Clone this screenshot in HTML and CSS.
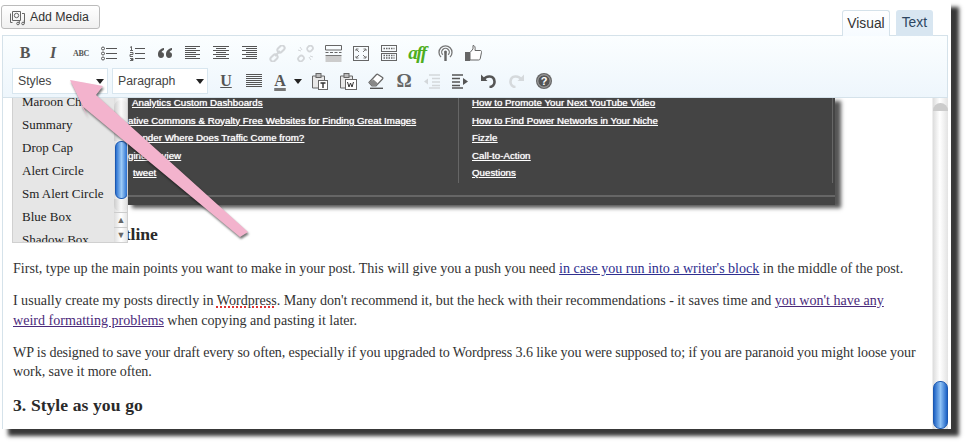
FILE: index.html
```html
<!DOCTYPE html>
<html lang="en">
<head>
<meta charset="utf-8">
<title>Editor</title>
<link rel="stylesheet" href="styles.css">
</head>
<body>
<div class="window">
  <header class="top">
    <button class="media">
      <svg width="17" height="17" viewBox="0 0 17 17" fill="none" stroke="#666" stroke-width="1"><path d="M3.5 2.5h8v9h-8zM1.5 4.5v9h2M13 4.5h2.500v9"/><circle cx="7.500" cy="6.500" r="2.200"/><circle cx="9" cy="14.500" r="1.300"/><circle cx="14" cy="14.500" r="1.300"/><path d="M10.300 14.500V11M15.300 14.500V11"/></svg>
      Add Media
    </button>
    <nav class="tabs"><span class="tab active">Visual</span><span class="tab">Text</span></nav>
  </header>

  <section class="toolbar">
    <div class="row">
      <span class="tool glyph b">B</span>
      <span class="tool glyph i">I</span>
      <span class="tool glyph abc">ABC</span>
      <span class="tool"><svg width="16" height="15" viewBox="0 0 16 15" fill="none" stroke="#555"><circle cx="2" cy="2.500" r="1.500"/><circle cx="2" cy="7.500" r="1.500"/><circle cx="2" cy="12.500" r="1.500"/><path d="M5 2.500h11M5 7.500h11M5 12.500h11"/></svg></span>
      <span class="tool"><svg width="16" height="15" viewBox="0 0 16 15" fill="none" stroke="#555"><path d="M1 1.500l1.500-1v4M1 4.500h3M1 6.500h3v2H1v2h3M1 12.500h3v2H1M4 13.500H2" stroke-width=".9"/><path d="M6 2.500h10M6 7.500h10M6 12.500h10"/></svg></span>
      <span class="tool"><svg width="14" height="10" viewBox="0 0 14 10" fill="#555"><path d="M6 0v2C4.500 2.500 3.800 3.200 3.600 4.200 5 4 6 5 6 7c0 1.800-1.200 3-3 3-1.900 0-3-1.500-3-3.500C0 3 2.200.6 6 0zM14 0v2c-1.500.5-2.200 1.200-2.400 2.200C13 4 14 5 14 7c0 1.800-1.200 3-3 3-1.900 0-3-1.500-3-3.500C8 3 10.200.6 14 0z"/></svg></span>
      <span class="tool"><svg width="16" height="14" viewBox="0 0 16 14" stroke="#555"><path d="M0 .5h15M0 2.500h11M0 4.500h15M0 6.500h11M0 8.500h15M0 10.500h11M0 12.500h15"/></svg></span>
      <span class="tool"><svg width="16" height="14" viewBox="0 0 16 14" stroke="#555"><path d="M0 .5h16M3 2.500h10M0 4.500h16M3 6.500h10M0 8.500h16M3 10.500h10M0 12.500h16"/></svg></span>
      <span class="tool"><svg width="16" height="14" viewBox="0 0 16 14" stroke="#555"><path d="M1 .5h15M5 2.500h11M1 4.500h15M5 6.500h11M1 8.500h15M5 10.500h11M1 12.500h15"/></svg></span>
      <span class="tool"><svg width="17" height="17" viewBox="0 0 17 17" fill="none" stroke="#d3d6d9" stroke-width="2"><rect x="8" y="1.500" width="8" height="5" rx="2.500" transform="rotate(-45 12 4)"/><rect x="1" y="10.500" width="8" height="5" rx="2.500" transform="rotate(-45 5 13)"/><path d="M6 11l5-5"/></svg></span>
      <span class="tool"><svg width="17" height="17" viewBox="0 0 17 17" fill="none" stroke="#d3d6d9" stroke-width="1.800"><rect x="10" y="1" width="6" height="5" rx="2.500" transform="rotate(-45 13 3.500)"/><rect x="1" y="11" width="6" height="5" rx="2.500" transform="rotate(-45 4 13.500)"/><path d="M3 2l2 3M1 5l3 1M14 15l-2-3M16 12l-3-1" stroke-width="1"/></svg></span>
      <span class="tool"><svg width="17" height="17" viewBox="0 0 17 17" fill="none" stroke="#666"><path d="M.5 5V.5h16V5zM.5 7.500h3M5 7.500h3M9.500 7.500h3M14 7.500h2.500"/><path d="M.5 10.500h16" stroke="#777"/><path d="M.5 11h16v6H.5z" fill="#ccc" stroke="none"/></svg></span>
      <span class="tool"><svg width="16" height="15" viewBox="0 0 16 15" fill="none" stroke="#666"><rect x=".5" y=".5" width="15" height="14"/><path d="M3 5V3h2.500M13 5V3h-2.500M3 10v2h2.500M13 10v2h-2.500M3 3l3 3M13 3l-3 3M3 12l3-3M13 12l-3-3" stroke="#777"/></svg></span>
      <span class="tool"><svg width="16" height="16" viewBox="0 0 16 16" fill="none" stroke="#666"><rect x=".5" y=".5" width="15" height="6"/><rect x=".5" y="8.500" width="15" height="7"/><path d="M2.500 3.500h11M2.500 10.500h11M2.500 13h11" stroke-width="1.500" stroke-dasharray="1.500 1"/></svg></span>
      <span class="tool glyph aff">aff</span>
      <span class="tool"><svg width="15" height="16" viewBox="0 0 15 16" fill="none" stroke="#777" stroke-width="1.300"><path d="M3 12A6.500 6.500 0 1 1 12 12"/><path d="M4.800 9.800A3.800 3.800 0 1 1 10.200 9.800"/><circle cx="7.500" cy="7" r="1.500" fill="#666" stroke="none"/><path d="M7.500 8v8" stroke="#666" stroke-width="2.400"/></svg></span>
      <span class="tool"><svg width="17" height="16" viewBox="0 0 17 16"><path d="M0 7h5v9H0z" fill="#666"/><path d="M5 7.500L8 4V.5c1.800 0 2.500 1.500 2 5h5.500c1 0 1.200 1 1 1.800l-1.300 6.500c-.2.800-.8 1.200-1.500 1.200H5z" fill="#fff" stroke="#666" stroke-width="1"/></svg></span>
    </div>
    <div class="row second">
      <span class="select">Styles<i class="caret"></i></span>
      <span class="select">Paragraph<i class="caret"></i></span>
      <span class="tool glyph u">U</span>
      <span class="tool"><svg width="16" height="14" viewBox="0 0 16 14" stroke="#555"><path d="M0 .5h16M0 2.500h16M0 4.500h16M0 6.500h16M0 8.500h16M0 10.500h16M0 12.500h16"/></svg></span>
      <span class="tool glyph color">A</span>
      <i class="caret small"></i>
      <span class="tool"><svg width="16" height="17" viewBox="0 0 16 17" fill="#fff" stroke="#666"><path d="M.5 3h12v12H.5z" fill="#e8e8e8"/><rect x="4" y=".5" width="5" height="4" fill="#bbb"/><rect x="6.500" y="7.500" width="9" height="9"/><path d="M8.500 10h5M11 10v5" stroke="#333" stroke-width="1.400"/></svg></span>
      <span class="tool"><svg width="17" height="17" viewBox="0 0 17 17" fill="#fff" stroke="#666"><path d="M.5 3h12v12H.5z" fill="#e8e8e8"/><rect x="4" y=".5" width="5" height="4" fill="#bbb"/><rect x="5.500" y="6.500" width="11" height="10"/><path d="M7.500 9l1.500 5 1.500-4 1.500 4 1.500-5" fill="none" stroke="#333"/></svg></span>
      <span class="tool"><svg width="16" height="16" viewBox="0 0 16 16"><path d="M1 9.500l7.500-8c.5-.5 1-.5 1.500 0l4.500 3c.5.500.5 1 0 1.500L8 13H4z" fill="#fff" stroke="#666" stroke-width="1.200"/><path d="M1 9.500L4 13h4l2-2.500-4.500-4z" fill="#888"/><path d="M2 15.300h13" stroke="#555" stroke-width="1.400"/></svg></span>
      <span class="tool glyph omega">Ω</span>
      <span class="tool"><svg width="16" height="15" viewBox="0 0 16 15" stroke="#d3d7da" stroke-width="1.400"><path d="M5 1h11M8 4.500h8M8 8h8M8 11.500h8M5 14h11"/><path d="M0 7.500l4-3v6z" fill="#d3d7da" stroke="none"/></svg></span>
      <span class="tool"><svg width="16" height="15" viewBox="0 0 16 15" stroke="#555" stroke-width="1.400"><path d="M0 1h11M0 4.500h8M0 8h8M0 11.500h8M0 14h11"/><path d="M16 7.500l-5-3.500v7z" fill="#555" stroke="none"/></svg></span>
      <span class="tool"><svg width="15" height="14" viewBox="0 0 15 14" fill="none"><path d="M3 5.500C5 1.500 13 1 13.500 7.500c.2 3-2 5.500-5 5.500" stroke="#555" stroke-width="2.600"/><path d="M0 .5l6.500 6.500H0z" fill="#555"/></svg></span>
      <span class="tool"><svg width="15" height="14" viewBox="0 0 15 14" fill="none"><path d="M12 5.500C10 1.500 2 1 1.500 7.500c-.2 3 2 5.500 5 5.500" stroke="#d5d9dc" stroke-width="2.600"/><path d="M15 .5L8.500 7H15z" fill="#d5d9dc"/></svg></span>
      <span class="tool"><svg width="16" height="16" viewBox="0 0 16 16"><circle cx="8" cy="8" r="8" fill="#666"/><circle cx="8" cy="8" r="6.200" fill="#555" stroke="#ddd" stroke-width=".6"/><text class="q" x="8" y="11.700" text-anchor="middle">?</text></svg></span>
    </div>
  </section>

  <div class="editor">
    <main class="content">
      <figure class="shot">
        <ul class="shot-left">
          <li class="in-a">Analytics Custom Dashboards</li>
          <li>ative Commons &amp; Royalty Free Websites for Finding Great Images</li>
          <li class="in-b">ender Where Does Traffic Come from?</li>
          <li>gine Review</li>
          <li class="in-c">tweet</li>
        </ul>
        <ul class="shot-right">
          <li>How to Promote Your Next YouTube Video</li>
          <li>How to Find Power Networks in Your Niche</li>
          <li>Fizzle</li>
          <li>Call-to-Action</li>
          <li>Questions</li>
        </ul>
      </figure>
      <h3 class="under-menu">1. Write an outline</h3>
      <p>First, type up the main points you want to make in your post. This will give you a push you need <a class="blue" href="#">in case you run into a writer's block</a> in the middle of the post.</p>
      <p>I usually create my posts directly in <span class="spell">Wordpress</span>. Many don't recommend it, but the heck with their recommendations - it saves time and <a href="#">you won't have any<br>weird formatting problems</a> when copying and pasting it later.</p>
      <p class="tight">WP is designed to save your draft every so often, especially if you upgraded to Wordpress 3.6 like you were supposed to; if you are paranoid you might loose your work, save it more often.</p>
      <h3>3. Style as you go</h3>
    </main>
    <div class="scroll">
      <span class="cap"></span>
      <span class="thumb"></span>
    </div>
  </div>

  <div class="menu">
    <ul class="menu-list">
      <li>Maroon Check</li><li>Summary</li><li>Drop Cap</li><li>Alert Circle</li><li>Sm Alert Circle</li><li>Blue Box</li><li>Shadow Box</li>
    </ul>
    <div class="menu-scroll">
      <span class="menu-cap"></span>
      <span class="menu-thumb"></span>
      <span class="menu-end"></span>
      <span class="arrow">▲</span>
      <span class="arrow">▼</span>
    </div>
  </div>

  <svg class="pointer" width="200" height="180" viewBox="0 0 200 180">
    <path class="pointer-fill" d="M15 15L48 21 41 30 193 167 185 172 26 40 33 52z"/>
  </svg>
</div>
</body>
</html>
```
FILE: styles.css
```css
* { box-sizing: border-box; }
html, body { margin: 0; padding: 0; background: #fff; }
body { width: 965px; height: 443px; overflow: hidden; font-family: "Liberation Sans", Arial, sans-serif; }
.window { position: relative; width: 951px; height: 429px; background: #fff; box-shadow: 8px 7px 4px #383838; display: flex; flex-direction: column; }

.top { height: 35px; display: flex; justify-content: space-between; align-items: flex-end; padding: 0 18px 0 1px; }
.media { height: 24px; width: 99px; margin-bottom: 6px; display: flex; align-items: center; gap: 4px; padding: 0 0 0 7px; border: 1px solid #bbb; border-radius: 3px; background: linear-gradient(#fff, #f0f0f0); font: 12.300px "Liberation Sans", sans-serif; color: #333; }
.tabs { display: flex; gap: 6px; margin-bottom: -1px; position: relative; z-index: 1; }
.tab { height: 26px; padding: 0 6px; line-height: 26px; font-size: 13.800px; color: #2c4560; background: #d8e6f1; border-radius: 3px 3px 0 0; }
.tab.active { color: #333; background: linear-gradient(#fff, #f6fbff); border: 1px solid #d5e2ea; border-bottom: 0; padding: 0 4px; line-height: 25px; }

.toolbar { margin-left: 2px; width: 946px; height: 63px; border: 1px solid #d5e2ea; background: linear-gradient(#fbfeff, #eef6fc); padding: 3px 0 0 8px; }
.row { display: flex; align-items: center; height: 28px; }
.row.second { margin-left: 1px; }
.tool { width: 28px; height: 24px; flex: none; display: flex; align-items: center; justify-content: center; }
.glyph { font-family: "Liberation Serif", serif; color: #555; }
.b { font-weight: 700; font-size: 16px; }
.i { font-weight: 700; font-style: italic; font-size: 16px; }
.abc { font-weight: 700; font-size: 8px; letter-spacing: -.3px; }
.aff { font: italic 700 19px "Liberation Serif", serif; color: #4fae1e; letter-spacing: -1.500px; }
.u { font-weight: 700; font-size: 16px; text-decoration: underline; }
.color { width: 24px; font-weight: 700; font-size: 16px; text-decoration: underline #777 3px; text-underline-offset: 2px; }
.omega { font-size: 19px; font-weight: 700; color: #666; }
.q { font: 700 11px "Liberation Sans", sans-serif; fill: #fff; }
.select { position: relative; width: 96px; height: 26px; margin-right: 4px; padding-left: 5px; line-height: 25px; font-size: 12.300px; color: #444; background: #fff; border: 1px solid #d8e6ef; flex: none; }
.caret { position: absolute; right: 2px; top: 10px; border: 4px solid transparent; border-top: 5px solid #222; border-bottom: 0; width: 0; height: 0; }
.caret.small { position: static; flex: none; margin: 0 4px 0 2px; }
.select .caret { right: 3px; }

.editor { flex: 1; min-height: 0; margin-left: 2px; display: flex; border-left: 1px solid #d5e2ea; overflow: hidden; }
.content { flex: 1; min-width: 0; padding-left: 10px; font-family: "Liberation Serif", serif; font-size: 14.100px; line-height: 19.500px; color: #333; word-spacing: -.1px; }
.shot { margin: 0 0 0 113px; width: 709px; height: 98px; background: #444; box-shadow: 6px 3px 4px #555; display: flex; position: relative; border-bottom: 9px solid #444; box-sizing: content-box; }
.shot::after { content: ""; position: absolute; left: 0; right: 0; top: 97px; height: 2px; background: #666; }
.shot ul { list-style: none; margin: -4px 0 0; padding: 0; height: 89px; font: 400 9.750px/17.500px "Liberation Sans", sans-serif; color: #fff; }
.shot li { text-decoration: underline; white-space: nowrap; word-spacing: 0; text-shadow: 0 0 1px #fff; }
.shot ul.shot-left { width: 332px; padding-left: 2px; }
.in-a { padding-left: 4px; }
.in-b { padding-left: 9px; }
.in-c { padding-left: 5px; }
.shot ul.shot-right { flex: 1; border-left: 1px solid #666; border-right: 1px solid #666; padding-left: 13px; margin-right: 2px; }
h3 { margin: 20px 0 0; font: 700 17.600px/21px "Liberation Serif", serif; color: #2a2a2a; word-spacing: .3px; }
h3.under-menu { margin-top: 19px; word-spacing: 1.600px; }
p { margin: 12.500px 0 0; }
.tight { letter-spacing: -.07px; }
h3 + p { margin-top: 14px; }
p + h3 { margin-top: 13px; }
a { color: #4b2a7b; text-decoration: underline; }
a.blue { color: #2f2f8f; }
.spell { text-decoration: underline dotted #d33 1.500px; }

.scroll { width: 16px; margin-right: 3px; flex: none; display: flex; flex-direction: column; justify-content: space-between; background: linear-gradient(90deg, #ddd, #fff 45%, #e3e3e3); border-left: 1px solid #eee; }
.cap { height: 8px; margin-top: 5px; background: #ccc; border-radius: 8px 8px 0 0; }
.thumb { height: 48px; border: 1px solid #1c58b0; border-radius: 7px; background: linear-gradient(90deg, #1f63c4, #8fc2f5 50%, #1c62c6); }

.menu { position: absolute; left: 12px; top: 98px; width: 116px; height: 145px; display: flex; background: #e6e6e6; border: 1px solid #d0d0d0; border-top: 0; overflow: hidden; }
.menu-list { list-style: none; margin: -8px 0 0; padding: 0 0 0 9px; width: 101px; font: 13px/23px "Liberation Serif", serif; color: #222; flex: none; white-space: nowrap; overflow: hidden; }
.menu-scroll { width: 14px; flex: none; display: flex; flex-direction: column; align-items: center; background: linear-gradient(90deg, #ddd, #fff 50%, #e2e2e2); }
.menu-cap { width: 100%; height: 41px; margin-top: 2px; border-radius: 8px 8px 0 0; background: linear-gradient(90deg, #ccc, #fafafa 50%, #ddd); flex: none; }
.menu-thumb { width: 13px; height: 58px; flex: none; border: 1px solid #1c58b0; border-radius: 6px; background: linear-gradient(90deg, #2a70d0, #9dcbf7 50%, #2a70d0); }
.menu-end { width: 100%; height: 13px; flex: none; background: linear-gradient(90deg, #ccc, #fafafa 50%, #ddd); border-radius: 0 0 8px 8px; }
.arrow { width: 100%; height: 15px; flex: none; text-align: center; font-size: 9px; line-height: 15px; color: #666; border-top: 1px solid #ccc; }

.pointer { position: absolute; left: 55px; top: 65px; filter: drop-shadow(1px 2px 1px rgba(0, 0, 0, .55)); }
.pointer-fill { fill: #f3b3cd; }
```
